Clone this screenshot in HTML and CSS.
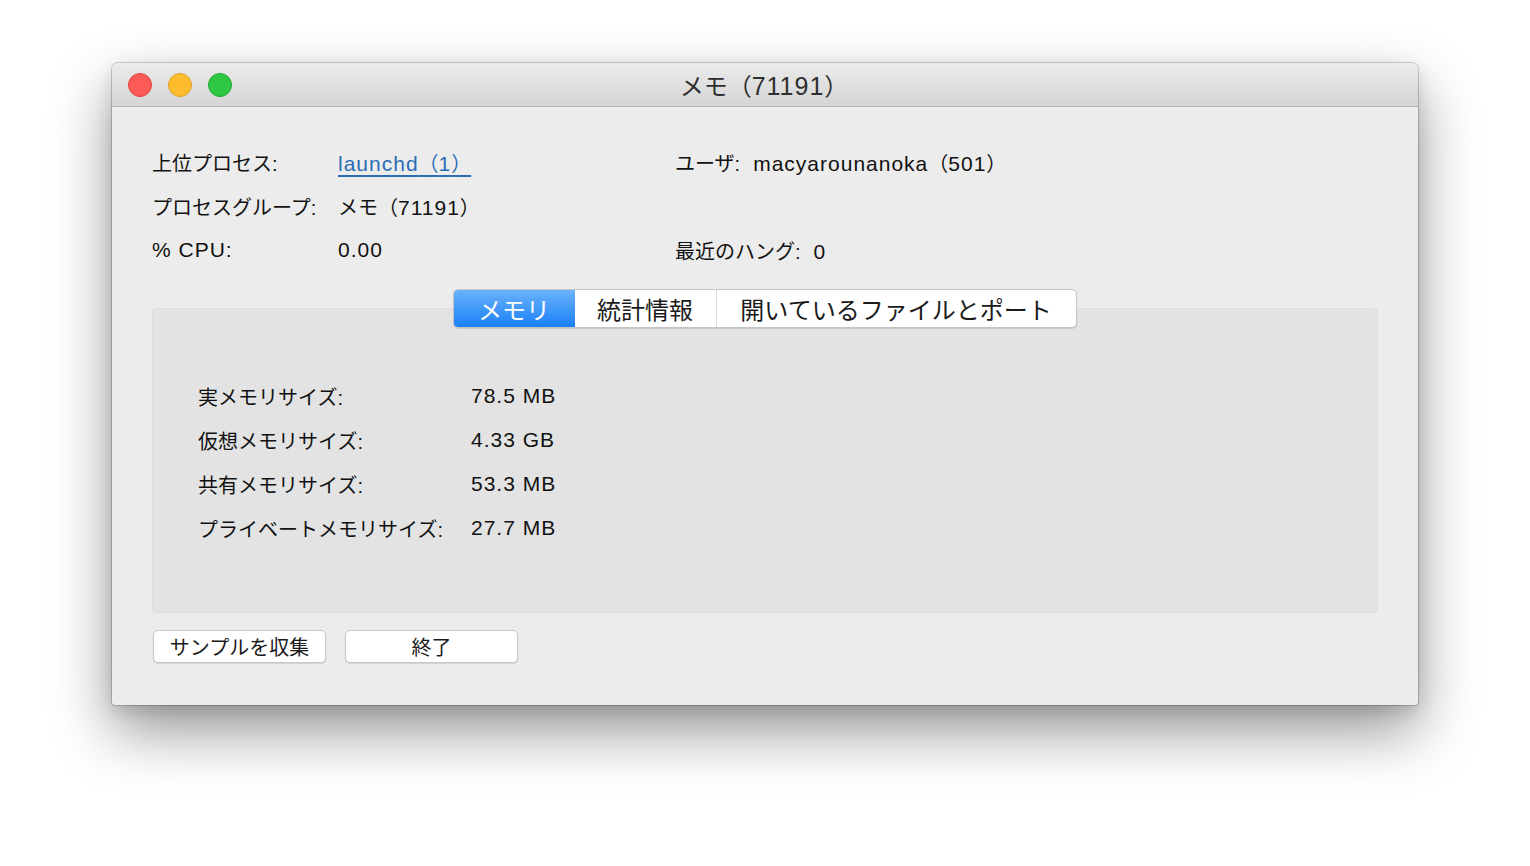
FILE: index.html
```html
<!DOCTYPE html>
<html lang="ja">
<head>
<meta charset="utf-8">
<title>メモ（71191）</title>
<link rel="stylesheet" href="styles.css">
</head>
<body>
<div class="window">
  <div class="titlebar">
    <div class="lights">
      <span class="light red"></span>
      <span class="light yellow"></span>
      <span class="light green"></span>
    </div>
    <div class="title">メモ（<span class="tl">71191</span>）</div>
  </div>
  <div class="content">
    <div class="info">
      <div class="lbl">上位プロセス:</div>
      <div class="val"><a class="link"><span class="lt">launchd</span>（<span class="lt">1</span>）</a></div>
      <div class="pair"><span>ユーザ:</span><span><span class="lt">macyarounanoka</span>（<span class="lt">501</span>）</span></div>

      <div class="lbl">プロセスグループ:</div>
      <div class="val">メモ（<span class="lt">71191</span>）</div>
      <div class="pair"></div>

      <div class="lbl lt">% CPU:</div>
      <div class="val lt">0.00</div>
      <div class="pair"><span>最近のハング:</span><span class="lt">0</span></div>
    </div>

    <div class="tabwrap">
      <div class="tabs">
        <div class="tab sel w1">メモリ</div>
        <div class="tab w2">統計情報</div>
        <div class="tab w3">開いているファイルとポート</div>
      </div>
    </div>
    <div class="panel">
      <div class="mem">
        <div class="mlbl">実メモリサイズ:</div><div class="mval lt">78.5 MB</div>
        <div class="mlbl">仮想メモリサイズ:</div><div class="mval lt">4.33 GB</div>
        <div class="mlbl">共有メモリサイズ:</div><div class="mval lt">53.3 MB</div>
        <div class="mlbl">プライベートメモリサイズ:</div><div class="mval lt">27.7 MB</div>
      </div>
    </div>

    <div class="buttons">
      <div class="btn">サンプルを収集</div>
      <div class="btn">終了</div>
    </div>
  </div>
</div>
</body>
</html>
```

FILE: styles.css
```css
html, body {
  margin: 0;
  padding: 0;
  background: #ffffff;
}
body {
  font-family: "Liberation Sans", "Noto Sans CJK JP", sans-serif;
  color: #111111;
  width: 1530px;
  height: 866px;
  overflow: hidden;
  padding-top: 63px;
  box-sizing: border-box;
}
.window {
  margin-left: 112px;
  width: 1306px;
  height: 642px;
  background: #ececec;
  border-radius: 6px 6px 3px 3px;
  box-shadow: 0 0 0 1px rgba(0,0,0,0.18), 0 26px 60px rgba(0,0,0,0.42), 0 6px 16px rgba(0,0,0,0.12);
  overflow: hidden;
}
.titlebar {
  height: 43px;
  border-bottom: 1px solid #b5b5b5;
  background: linear-gradient(#ebebeb, #d5d5d5);
  display: flex;
  align-items: center;
  position: relative;
}
.lights {
  display: flex;
  gap: 16px;
  padding-left: 16px;
}
.light {
  width: 24px;
  height: 24px;
  border-radius: 50%;
  box-sizing: border-box;
}
.red { background: #fc5b57; border: 1px solid #e2463f; }
.yellow { background: #fdbc2e; border: 1px solid #e0a229; }
.green { background: #2ec845; border: 1px solid #1fab31; }
.title {
  flex: 1;
  text-align: center;
  font-size: 24px;
  color: #2e2e2e;
  margin-right: 122px;
}
.tl {
  font-size: 25px;
  letter-spacing: 1px;
}
.content {
  padding: 33px 40px 0 40px;
}
.info {
  display: grid;
  grid-template-columns: 186px 337px auto;
  grid-auto-rows: 44px;
  align-items: center;
  font-size: 20px;
}
.lt {
  font-size: 21px;
  letter-spacing: 1px;
}
.link {
  color: #2b6cb5;
  text-decoration: underline;
  text-decoration-thickness: 2px;
  text-underline-offset: 4px;
  padding-right: 10px;
}
.pair {
  display: flex;
  align-items: baseline;
  gap: 13px;
}
.tabwrap {
  display: flex;
  justify-content: center;
  margin-top: 17px;
  position: relative;
  z-index: 1;
}
.tabs {
  display: flex;
  height: 39px;
  box-sizing: border-box;
  border: 1px solid #c4c4c4;
  border-radius: 5px;
  background: #ffffff;
  box-shadow: 0 1px 1px rgba(0,0,0,0.12);
  overflow: hidden;
  margin-left: -1px;
}
.tab {
  display: flex;
  align-items: center;
  justify-content: center;
  font-size: 24px;
  color: #1a1a1a;
  border-left: 1px solid #dcdcdc;
}
.tab.sel {
  background: linear-gradient(#6ab2fb, #1a80f8);
  color: #ffffff;
  border-left: none;
}
.tab.sel + .tab { border-left: none; }
.w1 { width: 121px; }
.w2 { width: 141px; }
.w3 { width: 359px; }
.panel {
  margin-top: -20px;
  height: 305px;
  background: #e3e3e3;
  border-radius: 4px;
  border: 1px solid #dedede;
  box-sizing: border-box;
  padding: 65px 0 0 45px;
}
.mem {
  display: grid;
  grid-template-columns: 273px auto;
  grid-auto-rows: 44px;
  align-items: center;
  font-size: 20px;
}
.buttons {
  display: flex;
  gap: 19px;
  margin-top: 17px;
  padding-left: 1px;
}
.btn {
  width: 173px;
  height: 33px;
  box-sizing: border-box;
  background: #ffffff;
  border: 1px solid #c8c8c8;
  border-radius: 5px;
  box-shadow: 0 1px 1px rgba(0,0,0,0.12);
  display: flex;
  align-items: center;
  justify-content: center;
  font-size: 20px;
  color: #1a1a1a;
}
```
